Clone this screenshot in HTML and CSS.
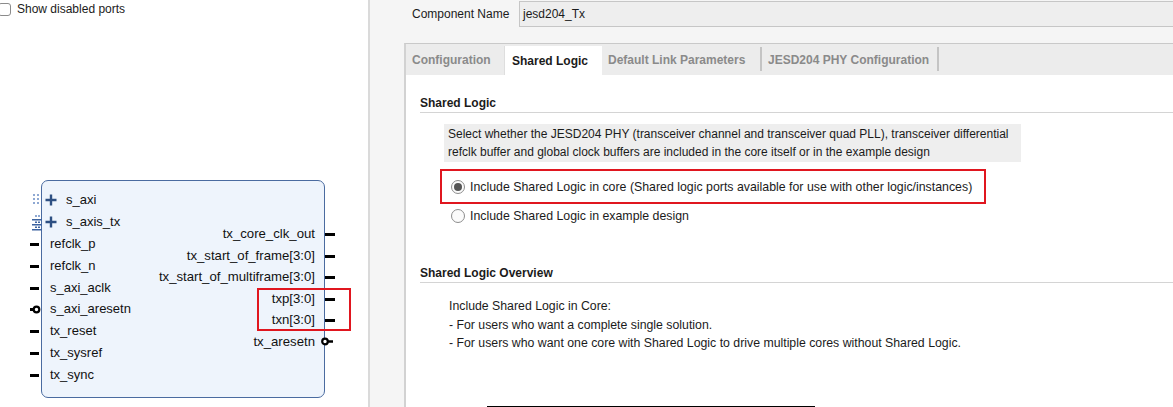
FILE: index.html
```html
<!DOCTYPE html>
<html>
<head>
<meta charset="utf-8">
<link rel="stylesheet" href="styles.css">
</head>
<body>
<div class="app">
  <div class="left">
    <div class="show"><span class="cb"></span><span>Show disabled ports</span></div>
    <div class="block">
      <div class="ports-left">
        <div class="port bus"><svg class="busmark" width="10" height="14" viewBox="0 0 10 14"><g fill="#8fa9d3"><rect x="1" y="1" width="2" height="2"/><rect x="5" y="1" width="2" height="2"/><rect x="1" y="5" width="2" height="2"/><rect x="5" y="5" width="2" height="2"/><rect x="1" y="9" width="2" height="2"/><rect x="5" y="9" width="2" height="2"/></g></svg><svg class="plus" width="12" height="12" viewBox="0 0 12 12"><path d="M6 0.5V11.5M0.5 6H11.5" stroke="#2d4f82" stroke-width="2.4"/></svg>s_axi</div>
        <div class="port bus"><svg class="busmark" width="10" height="18" viewBox="0 0 10 18"><g fill="#8fa9d3"><rect x="3" y="0" width="2" height="2"/><rect x="6" y="0" width="2" height="2"/></g><g fill="#3d63a0"><rect x="0" y="4" width="10" height="1.5"/><rect x="0" y="9" width="10" height="1.5"/><rect x="0" y="14" width="10" height="1.5"/><rect x="3" y="6.5" width="2" height="1.5"/><rect x="6" y="6.5" width="2" height="1.5"/><rect x="3" y="11.5" width="2" height="1.5"/><rect x="6" y="11.5" width="2" height="1.5"/></g></svg><svg class="plus" width="12" height="12" viewBox="0 0 12 12"><path d="M6 0.5V11.5M0.5 6H11.5" stroke="#2d4f82" stroke-width="2.4"/></svg>s_axis_tx</div>
        <div class="port pin">refclk_p</div>
        <div class="port pin">refclk_n</div>
        <div class="port pin">s_axi_aclk</div>
        <div class="port pin inv"><svg class="bubble-l" width="11" height="9" viewBox="0 0 11 9"><path d="M0 4.5H3" stroke="#000" stroke-width="3"/><circle cx="6.5" cy="4.5" r="2.8" fill="#fff" stroke="#000" stroke-width="2.2"/></svg>s_axi_aresetn</div>
        <div class="port pin">tx_reset</div>
        <div class="port pin">tx_sysref</div>
        <div class="port pin">tx_sync</div>
      </div>
      <div class="ports-right">
        <div class="rport pin">tx_core_clk_out</div>
        <div class="rport pin">tx_start_of_frame[3:0]</div>
        <div class="rport pin">tx_start_of_multiframe[3:0]</div>
        <div class="rport pin">txp[3:0]</div>
        <div class="rport pin">txn[3:0]</div>
        <div class="rport inv"><svg class="bubble-r" width="12" height="9" viewBox="0 0 12 9"><circle cx="4" cy="4.5" r="2.8" fill="#fff" stroke="#000" stroke-width="2.2"/><path d="M7 4.5H12" stroke="#000" stroke-width="2.5"/></svg>tx_aresetn</div>
      </div>
      <div class="mark-box"></div>
    </div>
  </div>
  <div class="right">
    <div class="name-row">
      <span class="name-label">Component Name</span>
      <div class="name-input">jesd204_Tx</div>
    </div>
    <div class="tabs">
      <div class="tabstrip">
        <div class="tab t1">Configuration</div>
        <div class="tab t2 active">Shared Logic</div>
        <div class="tab t3">Default Link Parameters</div>
        <div class="sep"></div>
        <div class="tab t4">JESD204 PHY Configuration</div>
        <div class="sep"></div>
      </div>
      <div class="content">
        <div class="heading">Shared Logic</div>
        <div class="desc">Select whether the JESD204 PHY (transceiver channel and transceiver quad PLL), transceiver differential<br>refclk buffer and global clock buffers are included in the core itself or in the example design</div>
        <div class="opt-box">
          <div class="radio-row"><span class="radio on"></span>Include Shared Logic in core (Shared logic ports available for use with other logic/instances)</div>
        </div>
        <div class="radio-row second"><span class="radio"></span>Include Shared Logic in example design</div>
        <div class="heading overview-h">Shared Logic Overview</div>
        <div class="overview">
          <div>Include Shared Logic in Core:</div>
          <div>- For users who want a complete single solution.</div>
          <div>- For users who want one core with Shared Logic to drive multiple cores without Shared Logic.</div>
        </div>
        <div class="rule"></div>
      </div>
    </div>
  </div>
</div>
</body>
</html>
```

FILE: styles.css
```css
html, body {
  margin: 0;
  padding: 0;
  height: 407px;
  overflow: hidden;
  background: #fff;
  font-family: "Liberation Sans", Arial, sans-serif;
  font-size: 12px;
  color: #1b1b1b;
}

.app {
  display: flex;
  height: 407px;
}

/* ---------- left pane ---------- */
.left {
  width: 368px;
  flex: none;
  border-right: 2px solid #dadada;
  background: #fff;
  overflow: hidden;
}

.show {
  display: flex;
  align-items: center;
  height: 16px;
  padding-top: 1px;
  font-size: 12px;
  color: #1b1b1b;
}

.cb {
  width: 11px;
  height: 11px;
  margin-left: -2px;
  margin-right: 6px;
  border: 1px solid #8b8b8b;
  border-radius: 3px;
  background: #fff;
}

.block {
  position: relative;
  margin: 163px 0 0 41px;
  width: 282px;
  height: 216px;
  border: 1px solid #4a6ba0;
  border-radius: 7px;
  background: #eef4fc;
  display: flex;
  justify-content: space-between;
  font-size: 13px;
  color: #111;
}

.ports-left {
  padding-top: 8px;
}

.port {
  position: relative;
  height: 21.9px;
  line-height: 21.9px;
  padding-left: 8px;
  white-space: nowrap;
}

.port.bus {
  padding-left: 24px;
}

.port .plus {
  position: absolute;
  left: 3px;
  top: 5px;
}

.port .busmark {
  position: absolute;
  left: -10px;
  top: 4px;
}

.port.pin::before {
  content: "";
  position: absolute;
  left: -12px;
  top: 10px;
  width: 9px;
  height: 3px;
  background: #000;
}

.port.inv::before {
  display: none;
}

.bubble-l {
  position: absolute;
  left: -12px;
  top: 7px;
}

.ports-right {
  padding-top: 42px;
  text-align: right;
}

.rport {
  position: relative;
  height: 21.6px;
  line-height: 21.6px;
  padding-right: 9px;
  white-space: nowrap;
  font-size: 13.2px;
}

.rport.pin::after {
  content: "";
  position: absolute;
  left: 100%;
  top: 10px;
  width: 10px;
  height: 3px;
  margin-left: 1px;
  background: #000;
}

.bubble-r {
  position: absolute;
  left: 100%;
  top: 6px;
  margin-left: -3px;
}

.mark-box {
  position: absolute;
  left: 215px;
  top: 107px;
  width: 90px;
  height: 39px;
  border: 2px solid #e0161f;
}

/* ---------- right pane ---------- */
.right {
  flex: 1;
  min-width: 0;
  background: #f5f5f5;
  overflow: hidden;
}

.name-row {
  display: flex;
  align-items: flex-start;
  padding-left: 42px;
  height: 27px;
}

.name-label {
  line-height: 28px;
  width: 107px;
  flex: none;
}

.name-input {
  flex: 1;
  margin-top: 1px;
  height: 24px;
  line-height: 24px;
  padding-left: 3px;
  border: 1px solid #c6c6c6;
  border-right: none;
  background: #eeeeee;
  color: #1b1b1b;
}

.tabs {
  margin: 16px 0 0 34px;
  border-left: 2px solid #d2d2d2;
  border-top: 1px solid #c9c9c9;
  height: 400px;
}

.tabstrip {
  display: flex;
  align-items: stretch;
  height: 31px;
  background: #ececec;
}

.tab {
  font-weight: bold;
  color: #8a8a8a;
  line-height: 32px;
  white-space: nowrap;
  box-sizing: border-box;
}

.t1 { width: 98px; padding-left: 6px; }
.t2 { width: 98px; padding-left: 8px; }
.t3 { width: 158px; padding-left: 6px; }
.t4 { width: 175px; padding-left: 6px; }

.tab.active {
  background: #fff;
  color: #1b1b1b;
  margin-top: 2px;
  line-height: 30px;
  border-left: 1px solid #dedede;
  padding-left: 7px;
}

.sep {
  width: 2px;
  margin: 3px 0 4px;
  background: #c4c4c4;
}

.content {
  background: #fff;
  padding: 20px 0 0 14px;
  height: 320px;
}

.heading {
  font-weight: bold;
  line-height: 16px;
  padding-bottom: 1px;
  border-bottom: 1px solid #d4d4d4;
  color: #1b1b1b;
}

.desc {
  margin: 11px 0 0 24px;
  width: 569px;
  height: 37px;
  padding: 1px 4px 0;
  line-height: 18px;
  background: #eeeeee;
  white-space: nowrap;
}

.opt-box {
  margin: 7px 0 0 20px;
  width: 542px;
  height: 31px;
  border: 2px solid #e0161f;
  display: flex;
  align-items: center;
}

.radio-row {
  display: flex;
  align-items: center;
  white-space: nowrap;
  height: 20px;
  padding-left: 9px;
  font-size: 12.35px;
}

.radio-row.second {
  margin-top: 2px;
  padding-left: 31px;
}

.radio {
  width: 12px;
  height: 12px;
  border: 1px solid #8d8d8d;
  border-radius: 50%;
  background: #fbfbfb;
  margin-right: 5px;
  display: flex;
  align-items: center;
  justify-content: center;
}

.radio.on::after {
  content: "";
  width: 8px;
  height: 8px;
  border-radius: 50%;
  background: #555;
}

.overview-h {
  margin-top: 39px;
}

.overview {
  margin: 14px 0 0 29px;
  line-height: 18.6px;
  white-space: nowrap;
  font-size: 12.3px;
}

.rule {
  margin: 53px 0 0 67px;
  width: 328px;
  border-top: 2px solid #000;
}
```
